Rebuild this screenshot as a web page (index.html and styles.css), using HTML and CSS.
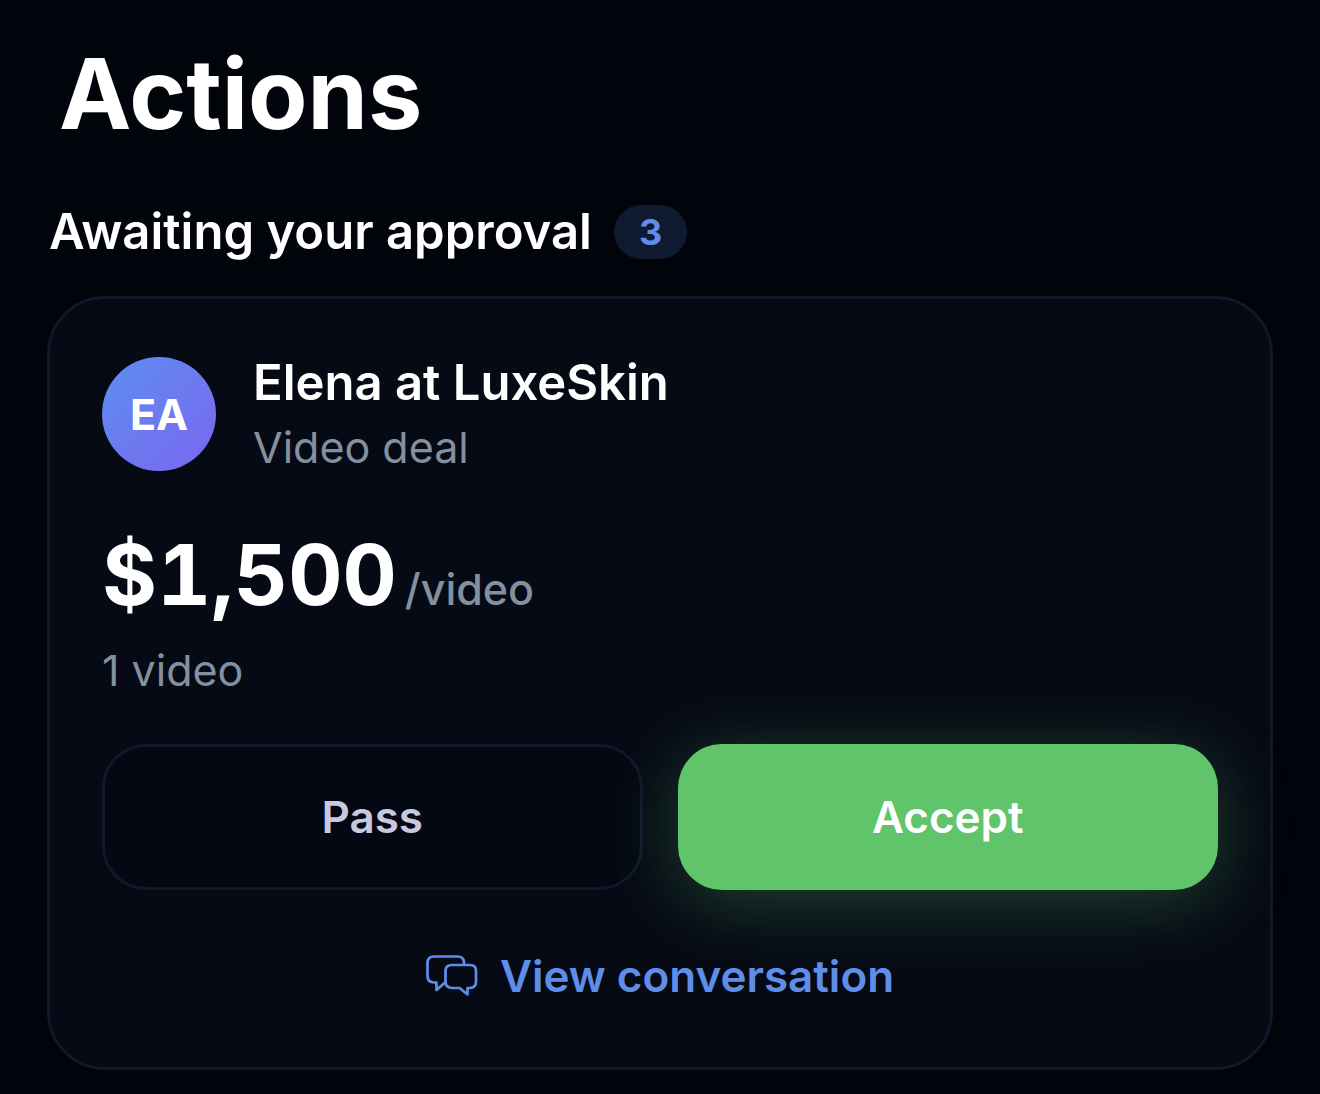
FILE: index.html
```html
<!DOCTYPE html>
<html lang="en">

<head>
    <meta charset="UTF-8" />
    <meta name="viewport" content="width=device-width, initial-scale=1.0" />
    <title>Actions</title>
    <link rel="stylesheet" href="styles.css">
</head>

<body>
    <main class="page">
        <h1>Actions</h1>

        <section class="approvals">
            <div class="section-header">
                <h2>Awaiting your approval</h2>
                <span class="count">3</span>
            </div>

            <article class="deal-card">
                <div class="deal-top">
                    <div class="avatar">EA</div>
                    <div class="deal-info">
                        <h3>Elena at LuxeSkin</h3>
                        <p>Video deal</p>
                    </div>
                </div>

                <div class="price">
                    <span class="amount">$1,500</span>
                    <span class="unit">/video</span>
                </div>
                <p class="quantity">1 video</p>

                <div class="buttons">
                    <button type="button" class="btn pass-btn">Pass</button>
                    <button type="button" class="btn accept-btn">Accept</button>
                </div>

                <a class="conversation-link" href="#">
                    <svg class="chat-icon" viewBox="0 0 52 42" aria-hidden="true">
                        <path d="M38 9 V8 Q38 1.500 31.500 1.500 H8 Q1.500 1.500 1.500 8 V21 Q1.500 27.500 8 27.500 H10.500 V35 L18.500 28" />
                        <path d="M26 10 H44 Q50 10 50 16 V26.500 Q50 33 44 33 H41.500 V39.500 L33.500 33 H26 Q19.500 33 19.500 26.500 V16 Q19.500 10 26 10 Z" />
                    </svg>
                    View conversation
                </a>
            </article>
        </section>
    </main>
</body>

</html>
```

FILE: styles.css
```css
* {
    box-sizing: border-box;
}

body {
    margin: 0;
    font-family: Inter, sans-serif;
    background-color: #02040c;
    color: #fff;
}

h1,
h2,
h3,
p {
    margin: 0;
}

.page {
    padding: 32px 47px 24px;
}

h1 {
    padding-left: 12px;
    font-size: 97px;
    font-weight: 700;
    line-height: 124px;
}

.section-header {
    display: flex;
    align-items: center;
    gap: 22px;
    margin: 44px 0 32px;
    padding-left: 2px;
}

h2,
h3 {
    font-size: 49px;
    font-weight: 600;
    line-height: 64px;
}

.count {
    padding: 0 25px;
    border-radius: 27px;
    background-color: #0f1a30;
    color: #5f8ee8;
    font-size: 36px;
    font-weight: 700;
    line-height: 54px;
}

.deal-card {
    padding: 52px 52px 61px;
    border: 3px solid #10182a;
    border-radius: 58px;
    background-color: #060a15;
}

.deal-top {
    display: flex;
    align-items: center;
    gap: 37px;
}

.avatar {
    width: 114px;
    height: 114px;
    border-radius: 50%;
    background: linear-gradient(135deg, #5b8ff2, #7c66ee);
    font-size: 43px;
    font-weight: 700;
    line-height: 114px;
    text-align: center;
}

.deal-info p,
.quantity {
    color: #84909f;
    font-size: 43px;
    line-height: 60px;
}

.deal-info p {
    margin-top: 2px;
}

.price {
    display: flex;
    align-items: baseline;
    gap: 8px;
    margin-top: 46px;
}

.amount {
    font-size: 84px;
    font-weight: 700;
    font-variant-numeric: tabular-nums;
    line-height: 104px;
}

.unit {
    color: #84909f;
    font-size: 43px;
    font-weight: 500;
}

.quantity {
    margin-top: 13px;
}

.buttons {
    display: grid;
    grid-template-columns: 1fr 1fr;
    gap: 35px;
    margin-top: 44px;
}

.btn {
    height: 146px;
    border-radius: 44px;
    font-family: inherit;
    font-size: 44px;
    font-weight: 600;
    cursor: pointer;
}

.pass-btn {
    border: 3px solid #10182a;
    background-color: #040812;
    color: #c8c9e0;
}

.accept-btn {
    border: none;
    background-color: #60c46b;
    color: #fff;
    box-shadow: 0 12px 72px rgba(96, 196, 107, 0.3);
}

.conversation-link {
    display: flex;
    justify-content: center;
    align-items: center;
    gap: 22px;
    margin-top: 56px;
    color: #5f8ee8;
    font-size: 44px;
    font-weight: 600;
    line-height: 60px;
    text-decoration: none;
}

.chat-icon {
    width: 52px;
    height: 42px;
    fill: none;
    stroke: currentColor;
    stroke-width: 2.7;
    stroke-linejoin: round;
    stroke-linecap: round;
}
```
